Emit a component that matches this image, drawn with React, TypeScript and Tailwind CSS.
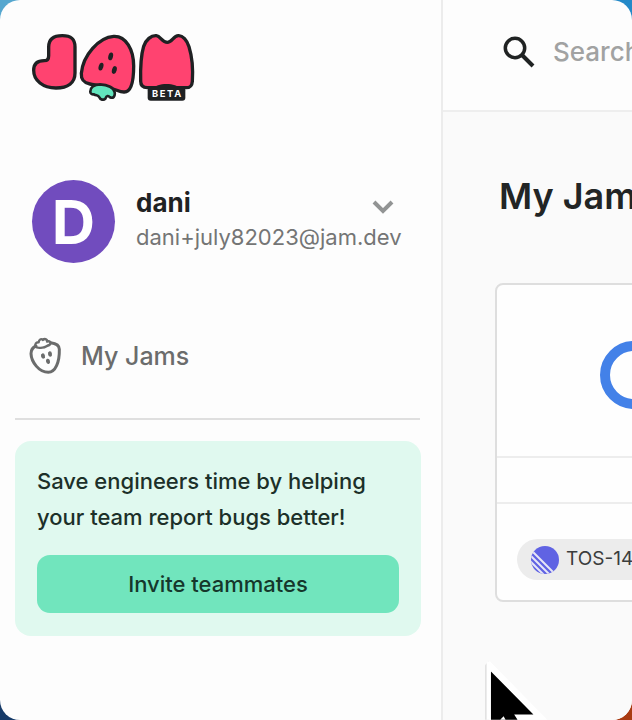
function JamLogo() {
  return (
    <svg viewBox="36 38 492 204" className="h-[68px] w-[164px]" role="img" aria-label="Jam beta">
      <g fill="#ff4370" stroke="#1f2123" strokeWidth="10" strokeLinejoin="round">
        <path d="M86 80C86 56 101 46 127 46S165 56 165 80V158C165 187 144 203 108 203C69 203 41 181 41 150C41 131 53 121 73 121C82 121 86 115 86 106Z" />
        <path d="M281 48C318 46 341 88 341 137C341 181 333 215 313 215C300 216 290 208 270 203C247 197 225 194 210 191C190 187 183 178 184 159C189 104 237 51 281 48Z" />
        <path d="M371 78C378 58 393 45 409 46C422 47 426 66 442 66C456 66 460 47 475 46C488 45 501 60 507 79C517 111 519 151 517 183C516 198 510 202 498 202H382C367 202 362 195 362 183C361 145 363 105 371 78Z" />
      </g>
      <path d="M211 215C210 202 222 192 240 192C264 193 282 202 284 216C286 229 279 235 270 231C265 225 260 225 256 235C250 240 241 239 238 231C234 222 229 227 222 222C215 223 211 219 211 215Z" fill="#62e5bd" stroke="#1f2123" strokeWidth="8" strokeLinejoin="round" />
      <g fill="#1f2123">
        <ellipse cx="272" cy="108" rx="7" ry="12" transform="rotate(14 272 108)" />
        <ellipse cx="243" cy="139" rx="7" ry="12" transform="rotate(16 243 139)" />
        <ellipse cx="283" cy="149" rx="7" ry="12" transform="rotate(16 283 149)" />
        <path d="M398 206C409 186 470 186 481 206Z" />
        <rect x="383" y="201" width="113" height="40" rx="9" />
      </g>
      <text x="442" y="231" textAnchor="middle" fill="#fff" fontSize="28" letterSpacing="5" className="font-['Inter',sans-serif] font-bold">BETA</text>
    </svg>
  );
}

function StrawberryIcon() {
  return (
    <svg viewBox="26 36 99 114" className="h-[38px] w-[33px]" fill="none" stroke="#6b6c6c" strokeWidth="9" strokeLinejoin="round" strokeLinecap="round" aria-hidden="true">
      <path d="M47 63C37 67 32 73 32 86C33 111 56 142 84 142C105 142 118 112 117 73C117 62 109 55 91 53" />
      <path d="M46 65C42 57 48 51 55 52C56 43 62 40 68 45C74 39 82 44 80 50C88 46 95 54 87 60C78 62 77 68 66 68C58 69 49 70 46 65Z" strokeWidth="7" />
      <g fill="#6b6c6c" stroke="none">
        <ellipse cx="68" cy="93" rx="6" ry="8" transform="rotate(-15 68 93)" />
        <ellipse cx="89" cy="87" rx="6" ry="8" transform="rotate(-10 89 87)" />
        <ellipse cx="83" cy="109" rx="6" ry="8" transform="rotate(-15 83 109)" />
      </g>
    </svg>
  );
}

function Sidebar() {
  return (
    <aside className="w-[443px] shrink-0 border-r-2 border-[#ececec] px-[15px] pt-[33px]">
      <div className="px-[17px]">
        <JamLogo />
      </div>
      <button type="button" className="mt-[79px] flex w-full items-center gap-[21px] pl-[17px] text-left">
        <span className="flex size-[83px] shrink-0 items-center justify-center rounded-full bg-[#714cbe] text-[60px] leading-none font-bold text-white">D</span>
        <span className="min-w-0 flex-1 pb-1">
          <span className="flex items-center justify-between pr-[32px]">
            <span className="text-[26px] leading-[34px] font-bold text-[#1f2223]">dani</span>
            <svg viewBox="0 0 22 14" className="mt-2 h-[14px] w-[22px]" fill="none" stroke="#929494" strokeWidth="4" aria-hidden="true">
              <path d="M2 2L11 11L20 2" />
            </svg>
          </span>
          <span className="block text-[22px] leading-[34px] whitespace-nowrap text-[#747575]">dani+july82023@jam.dev</span>
        </span>
      </button>
      <nav className="mt-[74px] pl-[14px]">
        <a href="#jams" className="flex items-center gap-[19px] text-[25px] leading-[38px] font-medium text-[#6b6c6c]">
          <StrawberryIcon />
          My Jams
        </a>
      </nav>
      <hr className="mt-[43px] mr-[6px] border-t-2 border-[#dfdfdf]" />
      <section className="mt-[21px] mr-[5px] rounded-2xl bg-[#e0f9ef] px-[22px] pt-[22px] pb-[23px]">
        <p className="text-[22px] leading-[36px] font-medium text-[#1c3029]">
          Save engineers time by helping
          <br />
          your team report bugs better!
        </p>
        <button type="button" className="mt-5 h-[58px] w-full rounded-[13px] bg-[#71e5bd] text-[22px] font-medium text-[#15372b]">
          Invite teammates
        </button>
      </section>
    </aside>
  );
}

function JamCard() {
  return (
    <article className="mt-[65px] w-[277px] overflow-hidden rounded-lg border-2 border-[#dedede] bg-[#fefefe]">
      <div className="flex h-[173px] items-center justify-center border-b-2 border-[#ededed] pt-2">
        <div className="size-[68px] rounded-full border-[10px] border-[#4381e8]" />
      </div>
      <div className="h-[46px] border-b-2 border-[#ededed]" />
      <div className="px-5 pt-[35px] pb-[20px]">
        <a href="#tos-14" className="flex h-[41px] items-center gap-[7px] rounded-full bg-[#ececec] pl-[14px] text-[19px] text-[#3b3d3d]">
          <svg viewBox="0 0 28 28" className="size-7" aria-hidden="true">
            <defs>
              <clipPath id="disc">
                <circle cx="14" cy="14" r="14" />
              </clipPath>
            </defs>
            <g clipPath="url(#disc)">
              <rect width="28" height="28" fill="#6063e3" />
              <path d="M1 5L24 28M0 10L20 30M-1 15L14 30" stroke="#e7e7f6" strokeWidth="2" />
            </g>
          </svg>
          TOS-14
        </a>
      </div>
    </article>
  );
}

function Cursor() {
  return (
    <svg viewBox="16 540 190 180" className="pointer-events-none absolute bottom-0 left-[485px] h-[60px] w-[63px]" aria-hidden="true">
      <path d="M16 555L28 542V720H16Z" fill="#e2e2e2" />
      <path d="M21 548Q28 539 35 548L204 720H21Z" fill="#fff" />
      <path d="M34 574L162 704H104L114 720H34Z" fill="#000" />
      <path d="M62 720L72 709L78 720Z" fill="#fff" />
    </svg>
  );
}

export default function App() {
  return (
    <div className="h-screen overflow-hidden bg-[conic-gradient(#2489c8_0_25%,#a93b12_25%_50%,#163a68_50%_75%,#56a7cf_75%)] font-['Inter','Liberation_Sans',sans-serif]">
      <div className="relative flex h-full overflow-hidden rounded-[20px] bg-[#fdfdfd]">
        <Sidebar />
        <div className="flex min-w-0 flex-1 flex-col overflow-hidden">
          <header className="flex h-[112px] shrink-0 items-center border-b-2 border-[#eeeeee] pb-[6px] pl-[60px]">
            <label htmlFor="search" aria-label="Search" className="shrink-0">
              <svg viewBox="0 0 32 32" className="size-8" fill="none" stroke="#202323" aria-hidden="true">
                <circle cx="12" cy="12" r="9.700" strokeWidth="3.500" />
                <path d="M19 19L30 30" strokeWidth="4" />
              </svg>
            </label>
            <input id="search" type="text" placeholder="Search" className="ml-[18px] min-w-[200px] flex-1 bg-transparent pb-[2px] text-[26px] font-medium text-[#303333] outline-none placeholder:text-[#a1a2a2]" />
          </header>
          <main className="flex-1 bg-[#fafafa] pt-[62px] pl-[52px]">
            <h1 className="pl-1 text-[36px] leading-[44px] font-semibold whitespace-nowrap text-[#222525]">My Jams</h1>
            <JamCard />
          </main>
        </div>
        <Cursor />
      </div>
    </div>
  );
}
